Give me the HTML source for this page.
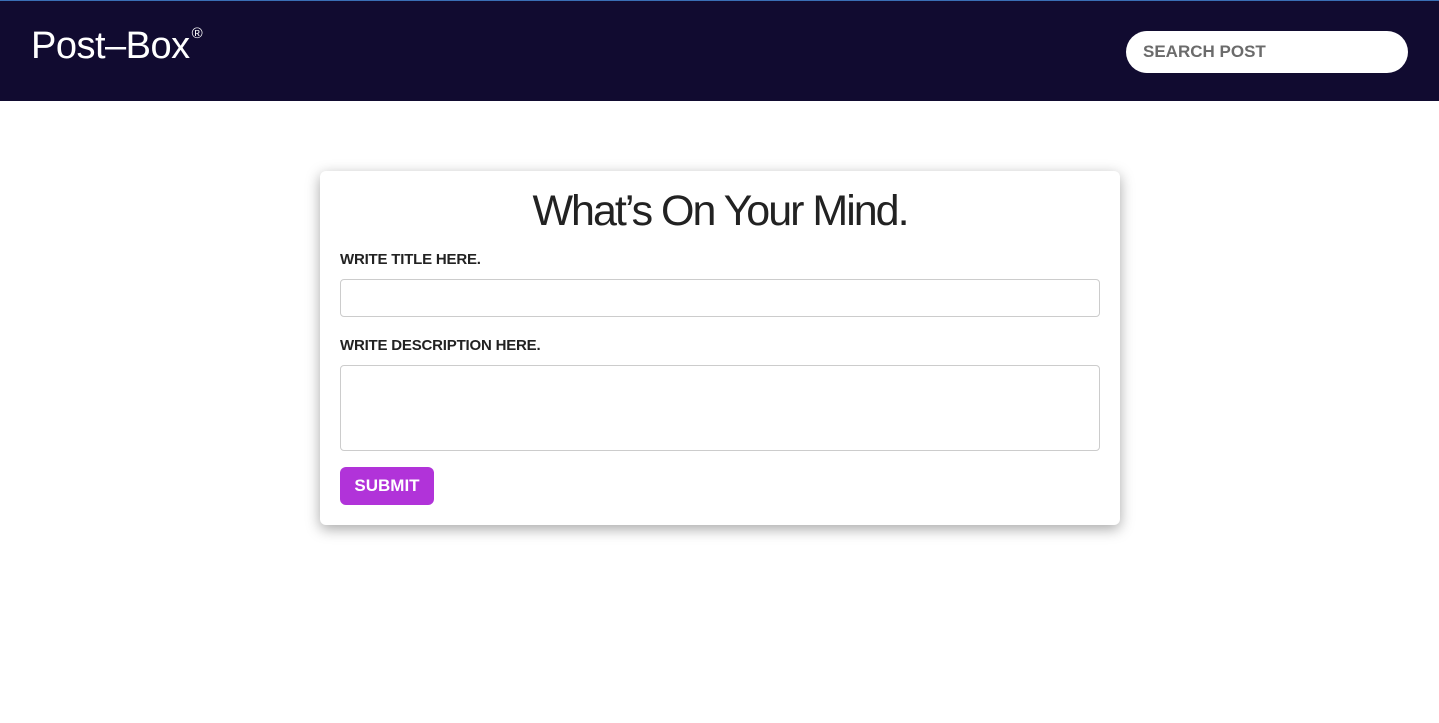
<!DOCTYPE html>
<html><head><style>
body{margin:0;background:#fff;font-family:"Liberation Sans",sans-serif;width:1439px;height:723px;overflow:hidden}
.nav{position:absolute;left:0;top:0;width:1439px;height:101px;background:#110b30;border-top:1px solid #3a6fb5;box-sizing:border-box}
.logo{position:absolute;left:31px;top:24px;color:#fff;font-size:38px;letter-spacing:-0.5px}
.logo sup{font-size:15px;position:relative;top:-6px;margin-left:2px}
.search{position:absolute;left:1126px;top:30px;width:282px;height:42px;border-radius:21px;background:#fff;box-sizing:border-box;padding-left:17px;line-height:42px;color:#6b6b6b;font-size:17px;font-weight:bold}
.card{position:absolute;left:320px;top:171px;width:800px;height:354px;background:#fff;border-radius:6px;box-shadow:0 4px 14px rgba(0,0,0,.35)}
h1{position:absolute;left:0;width:800px;top:16px;margin:0;text-align:center;font-weight:normal;font-size:43px;color:#222;letter-spacing:-2px}
.lbl{position:absolute;left:20px;font-size:15px;font-weight:bold;color:#222;letter-spacing:-0.2px}
.inp{position:absolute;left:20px;width:760px;border:1px solid #ccc;border-radius:4px;box-sizing:border-box}
.btn{position:absolute;left:20px;top:296px;width:94px;height:38px;background:#b133d9;border-radius:6px;color:#fff;font-weight:bold;font-size:17px;text-align:center;line-height:38px}
</style></head><body>
<div class="nav"><div class="logo">Post–Box<sup>®</sup></div><div class="search">SEARCH POST</div></div>
<div class="card">
<h1>What’s On Your Mind.</h1>
<div class="lbl" style="top:80px">WRITE TITLE HERE.</div>
<div class="inp" style="top:108px;height:38px"></div>
<div class="lbl" style="top:166px">WRITE DESCRIPTION HERE.</div>
<div class="inp" style="top:194px;height:86px"></div>
<div class="btn">SUBMIT</div>
</div>
</body></html>
